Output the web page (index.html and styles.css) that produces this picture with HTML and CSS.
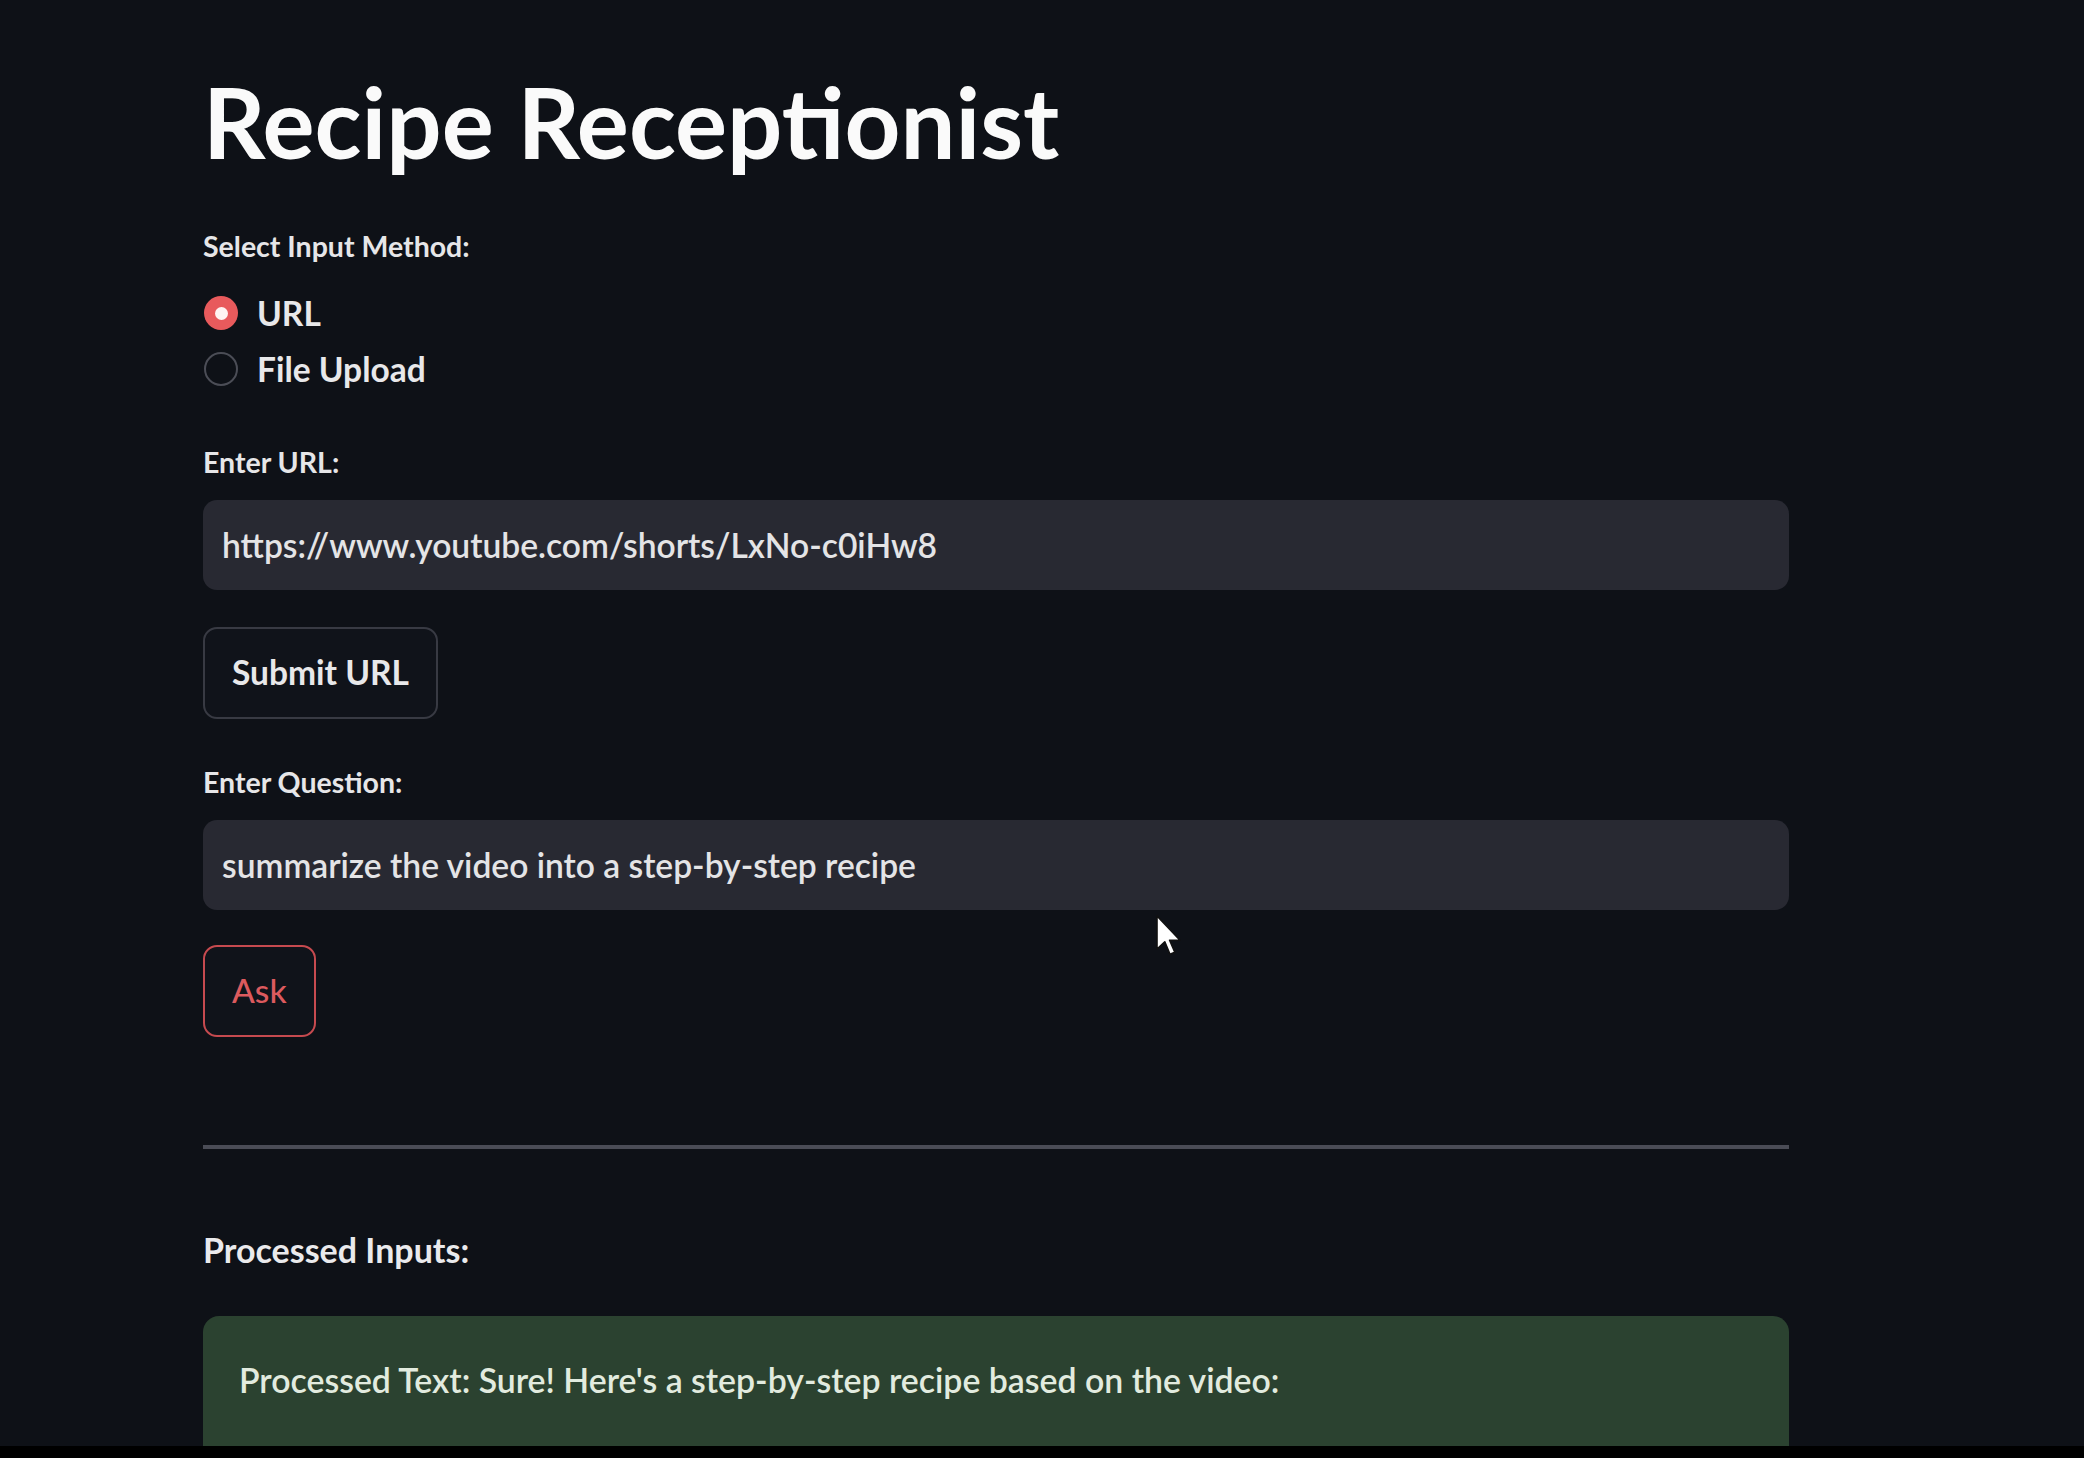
FILE: index.html
```html
<!DOCTYPE html>
<html lang="en">
<head>
<meta charset="utf-8">
<title>Recipe Receptionist</title>
<link rel="stylesheet" href="styles.css">
</head>
<body>
<div class="frame">
  <main class="app">
    <h1 class="title">Recipe Receptionist</h1>

    <div class="field-label label-method">Select Input Method:</div>
    <div class="radio-group">
      <label class="radio-option">
        <span class="radio-dot radio-dot--checked"></span>
        <span class="radio-text">URL</span>
      </label>
      <label class="radio-option">
        <span class="radio-dot"></span>
        <span class="radio-text">File Upload</span>
      </label>
    </div>

    <div class="field-label label-url">Enter URL:</div>
    <div class="text-input">https://www.youtube.com/shorts/LxNo-c0iHw8</div>
    <button class="btn btn-submit" type="button">Submit URL</button>

    <div class="field-label label-question">Enter Question:</div>
    <div class="text-input">summarize the video into a step-by-step recipe</div>
    <button class="btn btn-ask" type="button">Ask</button>

    <hr class="divider">

    <div class="section-heading">Processed Inputs:</div>
    <div class="success-box">
      <p class="success-text">Processed Text: Sure! Here's a step-by-step recipe based on the video:</p>
    </div>
  </main>

  <svg class="cursor" width="26" height="42" viewBox="0 0 13 21" aria-hidden="true">
    <path d="M0.5 0.5 L0.5 17 L4.4 13.4 L7 19.6 L9.4 18.6 L6.8 12.6 L12 12.6 Z" fill="#ffffff" stroke="#111" stroke-width="0.8" stroke-linejoin="round"/>
  </svg>
</div>
<div class="letterbox"></div>
</body>
</html>
```
FILE: styles.css
```css
html, body {
  margin: 0;
  padding: 0;
}

body {
  width: 2084px;
  height: 1458px;
  overflow: hidden;
  background: #000;
  font-family: "Lato", "Open Sans", sans-serif;
  color: #e8e8ea;
}

.frame {
  position: relative;
  height: 1446px;
  overflow: hidden;
  background: #0e1117;
}

.letterbox {
  height: 12px;
  background: #000;
}

.app {
  display: flex;
  flex-direction: column;
  align-items: flex-start;
  width: 1586px;
  padding-left: 203px;
}

.title {
  margin: 67px 0 0;
  height: 110px;
  line-height: 110px;
  font-size: 97.5px;
  font-weight: 700;
  color: #fafafa;
  white-space: nowrap;
}

.field-label {
  height: 40px;
  line-height: 40px;
  font-size: 28.5px;
  font-weight: 700;
  color: #e6e6e8;
  white-space: nowrap;
}

.label-method { margin-top: 49px; }
.label-url { margin-top: 51px; }
.label-question { margin-top: 43px; }

.radio-group {
  display: flex;
  flex-direction: column;
  gap: 12px;
  margin-top: 25px;
}

.radio-option {
  display: flex;
  align-items: center;
  gap: 19px;
  height: 44px;
}

.radio-dot {
  box-sizing: border-box;
  width: 34px;
  height: 34px;
  border-radius: 50%;
  border: 2px solid #4b4d56;
  margin-left: 1px;
  display: flex;
  align-items: center;
  justify-content: center;
}

.radio-dot--checked {
  border: none;
  background: #e85a5c;
}

.radio-dot--checked::after {
  content: "";
  width: 13px;
  height: 13px;
  border-radius: 50%;
  background: #fff4f2;
}

.radio-text {
  line-height: 44px;
  font-size: 33.5px;
  font-weight: 700;
  color: #e8e8ea;
}

.text-input {
  box-sizing: border-box;
  width: 100%;
  height: 90px;
  margin-top: 18px;
  padding: 0 19px;
  line-height: 90px;
  font-size: 33.6px;
  font-weight: 600;
  color: #e4e4e6;
  background: #282932;
  border-radius: 14px;
  white-space: nowrap;
}

.btn {
  box-sizing: border-box;
  height: 92px;
  padding: 0 27px;
  font-family: inherit;
  font-size: 33.5px;
  font-weight: 700;
  line-height: 1;
  border-radius: 14px;
  background: #10131a;
  cursor: pointer;
}

.btn-submit {
  margin-top: 37px;
  border: 2px solid #383a43;
  color: #e8e8ea;
}

.btn-ask {
  margin-top: 35px;
  border: 2px solid #c64a4f;
  color: #dc5a5e;
  font-weight: 500;
}

.divider {
  box-sizing: border-box;
  width: 100%;
  height: 4px;
  margin: 108px 0 0;
  border: none;
  background: #4a4c56;
}

.section-heading {
  margin-top: 79px;
  height: 44px;
  line-height: 44px;
  font-size: 34px;
  font-weight: 700;
  color: #eaeaec;
  white-space: nowrap;
}

.success-box {
  box-sizing: border-box;
  width: 100%;
  height: 200px;
  margin-top: 44px;
  padding: 42px 36px 0;
  background: #2b4230;
  border-radius: 16px;
}

.success-text {
  margin: 0;
  height: 44px;
  line-height: 44px;
  font-size: 33.8px;
  font-weight: 600;
  color: #e2ebdf;
  white-space: nowrap;
}

.cursor {
  position: absolute;
  left: 1156px;
  top: 915px;
}
```
